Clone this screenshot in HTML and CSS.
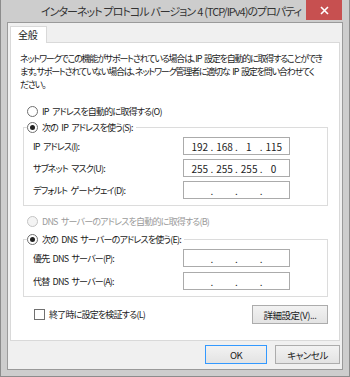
FILE: index.html
```html
<!DOCTYPE html>
<html lang="ja">
<head>
  <meta charset="UTF-8">
  <title>インターネット プロトコル バージョン 4 (TCP/IPv4)のプロパティ</title>
  <link rel="stylesheet" href="styles.css">
</head>
<body>
  <div class="window">
    <div class="titlebar">
      <span class="title">インターネット プロトコル バージョン 4 (TCP/IPv4)のプロパティ</span>
      <span class="close">
        <svg width="9" height="9" viewBox="0 0 9 9"><path d="M1 1L8 8M8 1L1 8" stroke="#fff" stroke-width="1.6"/></svg>
      </span>
    </div>
    <div class="client">
      <div class="tabs">
        <span class="tab">全般</span>
      </div>
      <div class="panel">
        <p class="intro">
          <span>ネットワークでこの機能がサポートされている場合は、IP 設定を自動的に取得することができ</span>
          <span>ます。サポートされていない場合は、ネットワーク管理者に適切な IP 設定を問い合わせてく</span>
          <span>ださい。</span>
        </p>

        <div class="option"><span class="radio"></span>IP アドレスを自動的に取得する(O)</div>
        <div class="group">
          <div class="legend"><span class="radio on"></span>次の IP アドレスを使う(S):</div>
          <div class="row">
            <span class="label">IP アドレス(I):</span>
            <span class="ip"><span>192</span>.<span>168</span>.<span>1</span>.<span>115</span></span>
          </div>
          <div class="row">
            <span class="label">サブネット マスク(U):</span>
            <span class="ip"><span>255</span>.<span>255</span>.<span>255</span>.<span>0</span></span>
          </div>
          <div class="row">
            <span class="label">デフォルト ゲートウェイ(D):</span>
            <span class="ip"><span></span>.<span></span>.<span></span>.<span></span></span>
          </div>
        </div>

        <div class="option disabled"><span class="radio"></span>DNS サーバーのアドレスを自動的に取得する(B)</div>
        <div class="group dns">
          <div class="legend"><span class="radio on"></span>次の DNS サーバーのアドレスを使う(E):</div>
          <div class="row">
            <span class="label">優先 DNS サーバー(P):</span>
            <span class="ip"><span></span>.<span></span>.<span></span>.<span></span></span>
          </div>
          <div class="row">
            <span class="label">代替 DNS サーバー(A):</span>
            <span class="ip"><span></span>.<span></span>.<span></span>.<span></span></span>
          </div>
        </div>

        <div class="footer-row">
          <label class="check"><span class="box"></span>終了時に設定を検証する(L)</label>
          <button class="btn">詳細設定(V)...</button>
        </div>
      </div>
      <div class="actions">
        <button class="btn default">OK</button>
        <button class="btn">キャンセル</button>
      </div>
    </div>
  </div>
</body>
</html>
```

FILE: styles.css
```css
body {
  margin: 0;
  background: #ffffff;
  font-family: "Noto Sans CJK JP", "Noto Sans", sans-serif;
  font-feature-settings: "palt";
  color: #1a1a1a;
}
.window {
  width: 350px;
  height: 377px;
  box-sizing: border-box;
  background: #cdcdcd;
  border: 1px solid #8c8c8c;
  border-top: none;
  padding: 0 6px 6px 6px;
  display: flex;
  flex-direction: column;
}
.titlebar {
  height: 22px;
  display: flex;
  align-items: center;
  justify-content: center;
  position: relative;
}
.title {
  font-size: 11px;
  color: #333;
  letter-spacing: -1px;
  word-spacing: 0.5px;
  margin-right: 8px;
  white-space: nowrap;
}
.close {
  position: absolute;
  right: 1px;
  top: 0;
  width: 36px;
  height: 20px;
  background: #c75050;
  display: flex;
  align-items: center;
  justify-content: center;
}
.client {
  flex: 1;
  background: #f0f0f0;
  border: 1px solid #9a9a9a;
  padding: 3px 2px 0 2px;
  display: flex;
  flex-direction: column;
}
.tabs {
  display: flex;
  height: 16px;
}
.tab {
  font-size: 10px;
  letter-spacing: -0.3px;
  background: #fff;
  border: 1px solid #d9d9d9;
  border-bottom: none;
  padding: 0 7px;
  line-height: 15px;
  width: 21px;
  margin-bottom: -1px;
  position: relative;
  z-index: 1;
}
.panel {
  background: #fff;
  border: 1px solid #d9d9d9;
  height: 299px;
  box-sizing: border-box;
  padding: 9px 8px 0 9px;
  font-size: 9px;
  letter-spacing: -0.8px;
  word-spacing: 2px;
}
.intro {
  margin: 0;
  line-height: 13px;
  letter-spacing: -1.2px;
}
.intro span {
  display: block;
  white-space: nowrap;
}
.option, .legend {
  display: flex;
  align-items: center;
  line-height: 13px;
  white-space: nowrap;
}
.option {
  margin: 14px 0 0 7px;
}
.option.disabled {
  color: #9a9a9a;
  margin-top: 9px;
}
.radio {
  width: 9px;
  height: 9px;
  border: 1px solid #707070;
  border-radius: 50%;
  margin-right: 4px;
  background: #fff;
  display: inline-flex;
  align-items: center;
  justify-content: center;
  flex-shrink: 0;
}
.disabled .radio {
  border-color: #c4c4c4;
  background: #f4f4f4;
}
.radio.on::after {
  content: "";
  width: 5px;
  height: 5px;
  border-radius: 50%;
  background: #222;
}
.group {
  margin: 9px 0 0 3px;
  border: 1px solid #dcdcdc;
  padding: 0 0 6px 9px;
  width: 305px;
  box-sizing: border-box;
}
.group .legend {
  margin: -7px 0 0 -6px;
  background: #fff;
  width: max-content;
  padding-right: 3px;
}
.row {
  display: flex;
  align-items: center;
  height: 18px;
  margin-top: 4px;
  white-space: nowrap;
}
.group .legend + .row {
  margin-top: 3px;
}
.label {
  width: 150px;
}
.ip {
  width: 107px;
  height: 18px;
  box-sizing: border-box;
  border: 1px solid #ababab;
  display: flex;
  align-items: center;
  justify-content: space-around;
  font-size: 10px;
  letter-spacing: 0;
  padding: 0 6px;
  color: #222;
}
.ip span {
  width: 16px;
  text-align: center;
}
.dns {
  margin-top: 11px;
}
.dns .row + .row {
  margin-top: 5px;
}
.footer-row {
  display: flex;
  align-items: center;
  justify-content: space-between;
  margin-top: 8px;
  padding-right: 3px;
}
.check {
  display: flex;
  align-items: center;
  margin-left: 14px;
}
.box {
  width: 9px;
  height: 9px;
  border: 1px solid #707070;
  margin-right: 4px;
}
.btn {
  font-family: inherit;
  font-feature-settings: "palt";
  font-size: 9.5px;
  letter-spacing: -0.5px;
  color: #1a1a1a;
  background: linear-gradient(#f2f2f2, #e3e3e3);
  border: 1px solid #acacac;
  height: 19px;
  padding: 0 8px;
  cursor: pointer;
}
.footer-row .btn {
  width: 76px;
}
.actions {
  display: flex;
  justify-content: flex-end;
  gap: 8px;
  padding-top: 4px;
}
.actions .btn {
  width: 62px;
}
.actions .btn + .btn {
  width: 65px;
}
.btn.default {
  border-color: #3399ff;
}
```
